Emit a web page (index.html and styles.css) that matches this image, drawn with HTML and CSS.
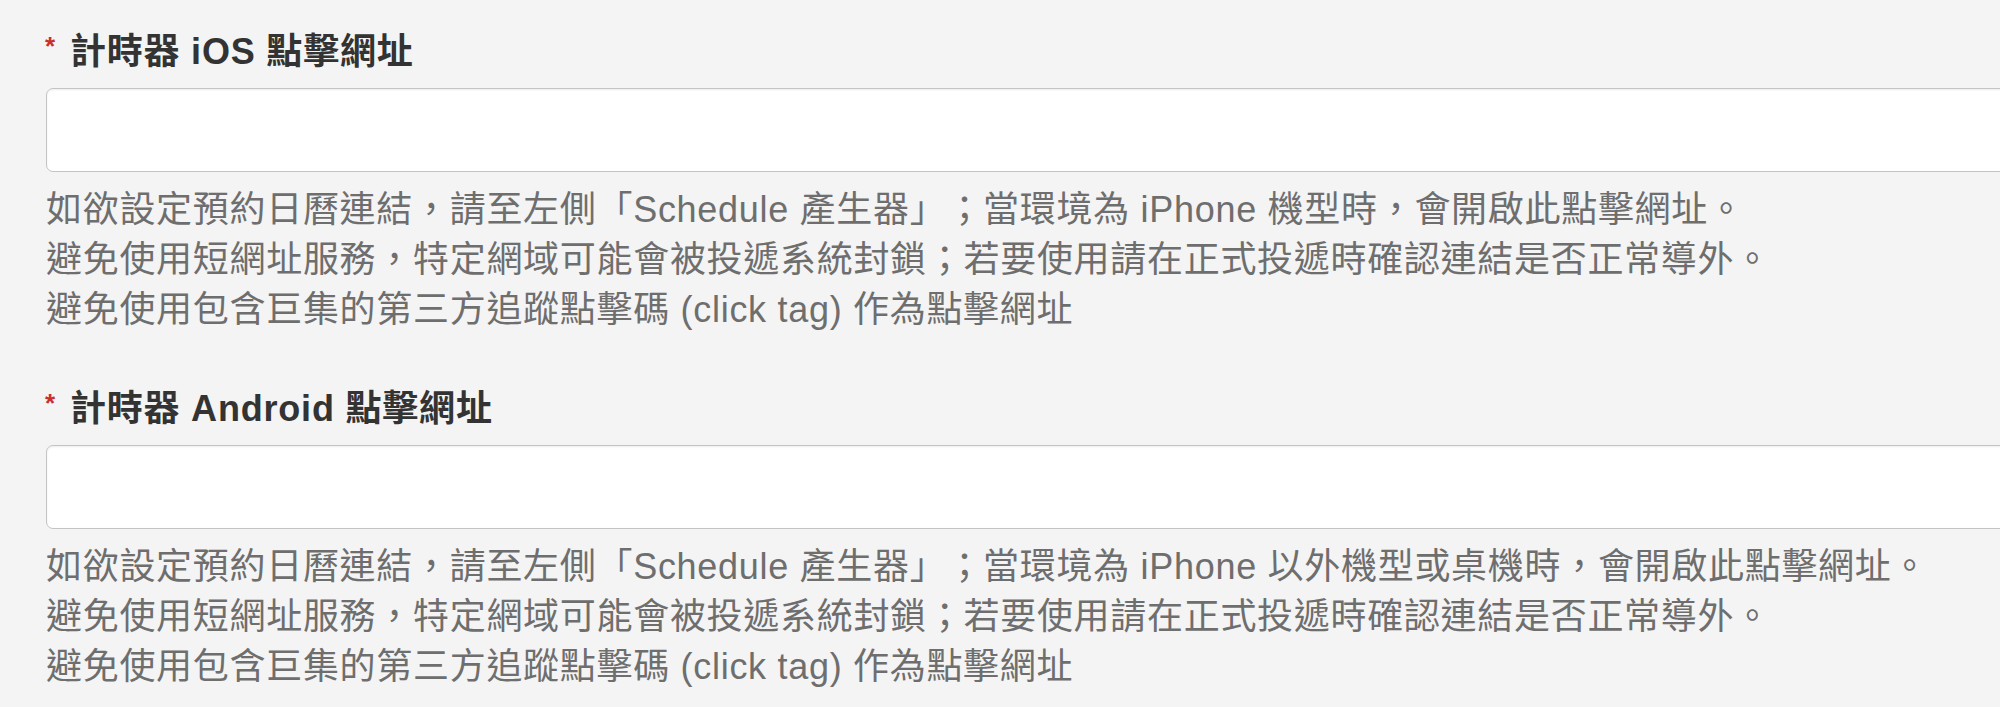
FILE: index.html
```html
<!DOCTYPE html>
<html lang="zh-Hant">
<head>
<meta charset="utf-8">
<title>計時器點擊網址</title>
<link rel="stylesheet" href="styles.css">
</head>
<body>
<div class="form">
  <div class="field">
    <label class="field-label"><span class="req">*</span>計時器 iOS 點擊網址</label>
    <input class="field-input" type="text">
    <div class="field-help">
      <p>如欲設定預約日曆連結，請至左側「Schedule 產生器」；當環境為 iPhone 機型時，會開啟此點擊網址。</p>
      <p>避免使用短網址服務，特定網域可能會被投遞系統封鎖；若要使用請在正式投遞時確認連結是否正常導外。</p>
      <p>避免使用包含巨集的第三方追蹤點擊碼 (click tag) 作為點擊網址</p>
    </div>
  </div>
  <div class="field">
    <label class="field-label"><span class="req">*</span>計時器 Android 點擊網址</label>
    <input class="field-input" type="text">
    <div class="field-help">
      <p>如欲設定預約日曆連結，請至左側「Schedule 產生器」；當環境為 iPhone 以外機型或桌機時，會開啟此點擊網址。</p>
      <p>避免使用短網址服務，特定網域可能會被投遞系統封鎖；若要使用請在正式投遞時確認連結是否正常導外。</p>
      <p>避免使用包含巨集的第三方追蹤點擊碼 (click tag) 作為點擊網址</p>
    </div>
  </div>
</div>
</body>
</html>
```

FILE: styles.css
```css
html, body {
  margin: 0;
  padding: 0;
  background: #f4f4f4;
  overflow: hidden;
}
body {
  font-family: "Liberation Sans", "Noto Sans CJK TC", sans-serif;
  font-size: 36px;
  line-height: 50px;
  text-spacing-trim: space-all;
}
.form {
  padding: 24px 0 0 46px;
  width: 2100px;
  display: flex;
  flex-direction: column;
  gap: 46px;
}
.field {
  display: flex;
  flex-direction: column;
}
.field-label {
  display: flex;
  align-items: flex-start;
  margin-left: -1px;
  padding-top: 3px;
  font-weight: bold;
  color: #333333;
  height: 50px;
  letter-spacing: 0.8px;
}
.req {
  color: #c9302c;
  font-size: 26px;
  line-height: 38px;
  margin-right: 14px;
}
.field-input {
  margin: 11px 0 0 0;
  height: 84px;
  width: 100%;
  box-sizing: border-box;
  background: #ffffff;
  border: 1px solid #c4c4c4;
  border-radius: 7px;
  box-shadow: inset 0 1px 2px rgba(0, 0, 0, 0.08);
  font-family: inherit;
  font-size: 36px;
  padding: 0 16px;
}
.field-help {
  margin-top: 13px;
  color: #6e6e6e;
}
.field-help p {
  margin: 0;
  letter-spacing: 0.7px;
}
```
